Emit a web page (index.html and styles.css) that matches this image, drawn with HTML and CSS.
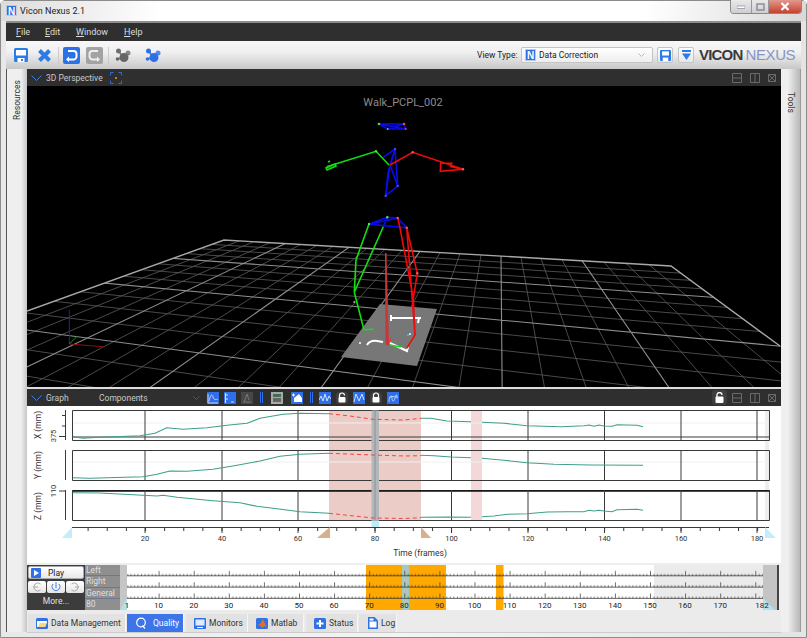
FILE: index.html
```html
<!DOCTYPE html>
<html lang="en">
<head>
<meta charset="utf-8">
<title>Vicon Nexus 2.1</title>
<link rel="stylesheet" href="styles.css">
</head>
<body>
<div class="window">
  <header class="titlebar">
    <span class="app-icon">N</span>
    <span class="app-title">Vicon Nexus 2.1</span>
    <div class="winctl">
      <span class="wbtn wmin"><svg width="8" height="4" viewBox="0 0 8 4"><rect x="0" y="1" width="8" height="2.4" fill="#fff" stroke="#889" stroke-width=".7"/></svg></span>
      <span class="wbtn wmax"><svg width="9" height="8" viewBox="0 0 9 8"><rect x="1" y="1" width="7" height="6" fill="none" stroke="#889" stroke-width="1.4"/></svg></span>
      <span class="wbtn wclose"><svg width="10" height="9" viewBox="0 0 10 9"><path d="M1.5 1 8.5 8M8.5 1 1.5 8" stroke="#fff" stroke-width="2.2"/></svg></span>
    </div>
  </header>
  <nav class="menubar">
    <span class="menu m-file"><u>F</u>ile</span>
    <span class="menu m-edit"><u>E</u>dit</span>
    <span class="menu m-window"><u>W</u>indow</span>
    <span class="menu m-help"><u>H</u>elp</span>
  </nav>
  <div class="toolbar">
    <svg class="ti" width="16" height="16" viewBox="0 0 16 16"><path d="M1 2.5A1.5 1.5 0 0 1 2.5 1h11A1.5 1.5 0 0 1 15 2.5v11a1.5 1.5 0 0 1-1.5 1.5h-11A1.5 1.5 0 0 1 1 13.5z" fill="#2d7be8"/><rect x="3" y="3" width="10" height="5.5" fill="#fff"/><rect x="4.5" y="11" width="7" height="4" fill="#fff"/><rect x="8" y="12" width="2" height="2" fill="#2d7be8"/></svg>
    <svg class="ti t-x" width="15" height="15" viewBox="0 0 15 15"><path d="M2.5 2.5 12.5 12.5M12.5 2.5 2.5 12.5" stroke="#2d7be8" stroke-width="4"/></svg>
    <span class="tsep t-s1"></span>
    <svg class="ti" width="17" height="17" viewBox="0 0 17 17"><rect width="17" height="17" rx="2" fill="#2c72e6"/><path d="M5 4h5.5a3 3 0 0 1 3 3v2.500a3 3 0 0 1-3 3H4.500" fill="none" stroke="#fff" stroke-width="2"/><path d="M6 9.500 3 12.500 6 15" fill="#fff"/></svg>
    <svg class="ti t-redo" width="17" height="17" viewBox="0 0 17 17"><rect width="17" height="17" rx="2" fill="#a3a3a3"/><path d="M12 4H6.500a3 3 0 0 0-3 3v2.500a3 3 0 0 0 3 3h6" fill="none" stroke="#eee" stroke-width="2"/><path d="M11 9.500 14 12.500 11 15" fill="#eee"/></svg>
    <span class="tsep t-s2"></span>
    <svg class="ti t-n1" width="16" height="15" viewBox="0 0 16 15"><path d="M3 3 9 9M13 5 9 9M3 11 9 9" stroke="#777" stroke-width="1.500"/><circle cx="3.500" cy="3" r="2.500" fill="#6f6f6f"/><circle cx="13" cy="5" r="2.500" fill="#888"/><circle cx="9" cy="9.500" r="4.500" fill="#666"/><circle cx="2.500" cy="11" r="1.800" fill="#666"/></svg>
    <svg class="ti t-n2" width="16" height="15" viewBox="0 0 16 15"><path d="M3 3 9 9M13 5 9 9M3 11 9 9" stroke="#2d6fe6" stroke-width="1.500"/><circle cx="3.500" cy="3" r="2.500" fill="#2d6fe6"/><circle cx="13" cy="5" r="2.500" fill="#4f8af0"/><circle cx="9" cy="9.500" r="4.500" fill="#2d6fe6"/><circle cx="2.500" cy="11" r="1.800" fill="#2d6fe6"/></svg>
    <span class="view-label">View Type:</span>
    <div class="combo">
      <span class="app-icon combo-icon">N</span>
      <span class="combo-text">Data Correction</span>
      <svg width="7" height="4" viewBox="0 0 7 4"><path d="M.5.5 3.500 3.500 6.500.5" fill="none" stroke="#a9bcd8"/></svg>
    </div>
    <span class="tbtn"><svg width="11" height="11" viewBox="0 0 16 16"><path d="M0 1.500A1.500 1.500 0 0 1 1.500 0h13A1.500 1.500 0 0 1 16 1.500v13a1.500 1.500 0 0 1-1.500 1.500h-13A1.500 1.500 0 0 1 0 14.500z" fill="#2d7be8"/><rect x="3" y="2" width="10" height="6" fill="#fff"/><rect x="4" y="11" width="8" height="5" fill="#fff"/></svg></span>
    <span class="tbtn tbtn2"><svg width="9" height="10" viewBox="0 0 9 10"><rect width="9" height="2" fill="#2d7be8"/><path d="M0 3.500H9L4.500 10z" fill="#2d7be8"/></svg></span>
    <div class="logo"><b>VICON</b><span>NEXUS</span></div>
  </div>
  <div class="main">
    <aside class="side side-left"><span class="side-text">Resources</span></aside>
    <div class="center">
      <div class="phead">
        <svg class="chev" width="11" height="6" viewBox="0 0 11 6"><path d="M.5.5 5.500 5.500 10.500.5" fill="none" stroke="#3f7fe0"/></svg>
        <span class="ptitle ptitle3d">3D Perspective</span>
        <svg class="focus" width="12" height="12" viewBox="0 0 12 12"><path d="M.5 3.500V.5h3M8.500.5h3v3M11.500 8.500v3h-3M3.500 11.500h-3v-3" fill="none" stroke="#2d6fe6"/><circle cx="6" cy="6" r="1" fill="#e0a030"/></svg>
        <div class="pctl">
          <svg width="10" height="10" viewBox="0 0 10 10"><path d="M.5.5h9v9h-9zM.5 5h9" fill="none" stroke="#6a6a6a"/></svg>
          <svg width="10" height="10" viewBox="0 0 10 10"><path d="M.5.5h9v9h-9zM5 .5v9" fill="none" stroke="#6a6a6a"/></svg>
          <svg width="8" height="8" viewBox="0 0 8 8"><path d="M.5.5h7v7h-7zM.5.5l7 7M7.500.5l-7 7" fill="none" stroke="#6a6a6a"/></svg>
        </div>
      </div>
      <svg class="view3d" viewBox="27 86 754 301" width="754" height="301">
        <defs><clipPath id="floor"><path d="M224 240 671 266 1013 516-328 438z"/></clipPath></defs>
        <rect x="27" y="86" width="754" height="301" fill="#000"/>
        <text class="clip-title" x="403" y="106" text-anchor="middle">Walk_PCPL_002</text>
        <g clip-path="url(#floor)">
          <path class="gminor" d="M500 141-283 441M500 141-238 443M500 141-190 446M500 141-97 451M500 141-49 454M500 141-1 457M500 141 101 463M500 141 155 466M500 141 206 469M500 141 320 476M500 141 380 479M500 141 443 483M500 141 563 490M500 141 623 493M500 141 686 497M500 141 812 504M500 141 878 508M500 141 947 512"/>
          <path class="gminor" d="M-100 225.300 800 280.400M-100 229.300 800 287.400M-100 234 800 295.500M-100 244 800 313M-100 250 800 323.400M-100 256.800 800 335M-100 273.600 800 364M-100 284.400 800 383M-100 297.800 800 406M-100 331 800 464M-100 355 800 505"/>
          <path class="gmajor" d="M500 141-145 449M500 141 47 460M500 141 260 472M500 141 503 486M500 141 746 500M-100 238.700 800 303.600M-100 264 800 348M-100 313 800 433"/>
        </g>
        <path class="gedge" d="M27 311 224 240 671 266 780 346"/>
        <path class="axis-b" d="M69.300 310V344"/>
        <path class="axis-g" d="M69.300 344 77.300 336"/>
        <path class="axis-r" d="M69.300 344 103.300 346.700"/>
        <polygon class="plate" points="380,304 437,309 417,366 341,357"/>
        <path class="plate-mark" d="M390 318H421M419 318 418 323M391 315V321M367 345Q370 340 377 341L383 342M390 343 407 351 408 347"/>
        <circle cx="360" cy="343" r="1" fill="#fff"/>
        <path class="pole" d="M385 253H386.500L389 345H385.500z"/>
        <g class="bones blue">
          <path d="M379 124H404L405.700 129H387.700zM379 124 405.700 129M404 124 387.700 129"/>
          <path d="M383.300 157.300 395 149 397.700 186 385.700 195.700 390 165 397.700 186M395 149 388 173 385.700 195.700M390 165 395 149"/>
          <path d="M369 224.300 387.300 217.300 397.700 218 406.700 227.700zM387.300 217.300 383.300 226.700M397.700 218 369 224.300"/>
        </g>
        <g class="bones green">
          <path d="M326.700 166.700 376 151.300 389 165"/>
          <path d="M326 168 335 164 336 166 327 170zM328 162 330 161"/>
          <path d="M369 224 356 260 354.300 292.300M383.300 226.700 354.300 292.300M356 260 355 280"/>
          <path d="M354.300 292.300 364 330 374 329M390 345 401 347"/>
        </g>
        <g class="bones red">
          <path d="M390 165 412.700 152.300 463 169.300 440.300 171.300 440.700 163.300 451.700 163.300 450.700 166.700 463 169.300"/>
          <path d="M397.700 218 400 228 413.300 298.300 415 335 406.700 348.300M406.700 227.700 417.300 273.300 413.300 298.300M406.700 227.700 415 335"/>
        </g>
        <path d="M389 340 391 340" stroke="#f33" stroke-width="3"/>
        <rect x="407" y="334" width="2" height="2" fill="#5ad"/>
        <rect x="409" y="333" width="2" height="2" fill="#bde"/>
        <g class="markers">
          <circle cx="379" cy="124" r="1.300" fill="#4d4"/><circle cx="404" cy="124" r="1.300" fill="#e44"/><circle cx="405.700" cy="129" r="1" fill="#e44"/><circle cx="387.700" cy="129" r="1" fill="#4d4"/>
          <circle cx="376" cy="151.300" r="1.200" fill="#4e4"/><circle cx="412.700" cy="152.300" r="1.200" fill="#f55"/><circle cx="463" cy="169.300" r="1.200" fill="#f55"/><circle cx="395" cy="149" r="1.200" fill="#44f"/><circle cx="397.700" cy="186" r="1.200" fill="#44f"/><circle cx="385.700" cy="195.700" r="1.200" fill="#44f"/>
          <circle cx="369" cy="224" r="1.200" fill="#4e4"/><circle cx="387.300" cy="217.300" r="1.200" fill="#4e4"/><circle cx="397.700" cy="218" r="1.200" fill="#f55"/><circle cx="406.700" cy="227.700" r="1.200" fill="#f55"/><circle cx="417.300" cy="273.300" r="1.200" fill="#f55"/><circle cx="354.300" cy="302" r="1" fill="#aaa"/>
        </g>
      </svg>
      <div class="splitter"></div>
      <div class="phead">
        <svg class="chev" width="11" height="6" viewBox="0 0 11 6"><path d="M.5.5 5.500 5.500 10.500.5" fill="none" stroke="#3f7fe0"/></svg>
        <span class="ptitle gtitle">Graph</span>
        <span class="ptitle gcomp">Components</span>
        <svg class="gdrop" width="7" height="4" viewBox="0 0 7 4"><path d="M.5.5 3.500 3.500 6.500.5" fill="none" stroke="#3a5c94"/></svg>
        <div class="gtools">
          <svg class="gi" viewBox="0 0 12 12"><rect width="12" height="12" fill="#2f6fec"/><path d="M1 2V11H11M2 9C4 2 5 2 6 5S9 8 11 7" fill="none" stroke="#cfe0ff" stroke-width=".9"/></svg>
          <svg class="gi" viewBox="0 0 12 12"><rect width="12" height="12" fill="#2f6fec"/><path d="M1.500 1V11M1 3H4M1 7H4M7 10 10 10" fill="none" stroke="#cfe0ff" stroke-width="1.100"/></svg>
          <svg class="gi" viewBox="0 0 12 12"><rect width="12" height="12" fill="#474747"/><path d="M2 10H10M3 10 6 2 8 8" fill="none" stroke="#777"/></svg>
          <span class="gsep"></span>
          <svg class="gi" viewBox="0 0 12 12"><rect width="12" height="12" fill="#a8a8a8"/><rect x="2" y="2" width="8" height="3" fill="#3f7050"/><rect x="2" y="6" width="8" height="4" fill="#666"/></svg>
          <svg class="gi gi-wide" viewBox="0 0 12 12"><rect width="12" height="12" fill="#2f6fec"/><path d="M3 10V6L8 2 11 6V10z" fill="#fff"/><path d="M1 3H4M2.500 1.500V4.500" stroke="#fff"/></svg>
          <span class="gsep gsep2"></span>
          <svg class="gi" viewBox="0 0 12 12"><rect width="12" height="12" fill="#2f6fec"/><path d="M0 8 2 4 4 9 6 2 8 9 10 4 12 7" fill="none" stroke="#cfe0ff"/></svg>
          <svg class="gi gi-lock" viewBox="0 0 12 12"><rect width="12" height="12" fill="#3e3e3e"/><path d="M3.500 5V3.500a2.500 2.500 0 0 1 5 0" fill="none" stroke="#fff" stroke-width="1.200"/><rect x="2.500" y="5" width="7" height="5.500" rx="1" fill="#fff"/></svg>
          <svg class="gi" viewBox="0 0 12 12"><rect width="12" height="12" fill="#2f6fec"/><path d="M1 10 3 2 6 9 9 2 11 8" fill="none" stroke="#cfe0ff"/></svg>
          <svg class="gi gi-lock" viewBox="0 0 12 12"><rect width="12" height="12" fill="#3e3e3e"/><path d="M3.500 5V3.500a2.500 2.500 0 0 1 5 0V5" fill="none" stroke="#fff" stroke-width="1.200"/><rect x="2.500" y="5" width="7" height="5.500" rx="1" fill="#fff"/></svg>
          <svg class="gi" viewBox="0 0 12 12"><rect width="12" height="12" fill="#2f6fec"/><path d="M2 10C2 4 5 2 5 6S7 10 8 6 10 2 10 5M2 6C4 4 8 4 11 6" fill="none" stroke="#cfe0ff" stroke-width=".8"/></svg>
        </div>
        <div class="pctl">
          <span class="lockbtn"><svg width="9" height="11" viewBox="0 0 9 11"><path d="M2 5V3a2.500 2.500 0 0 1 5 0" fill="none" stroke="#fff" stroke-width="1.300"/><rect x=".5" y="4.500" width="8" height="6.500" rx="1" fill="#fff"/></svg></span>
          <svg width="10" height="10" viewBox="0 0 10 10"><path d="M.5.5h9v9h-9zM.5 5h9" fill="none" stroke="#6a6a6a"/></svg>
          <svg width="10" height="10" viewBox="0 0 10 10"><path d="M.5.5h9v9h-9zM5 .5v9" fill="none" stroke="#6a6a6a"/></svg>
          <svg width="8" height="8" viewBox="0 0 8 8"><path d="M.5.5h7v7h-7zM.5.5l7 7M7.500.5l-7 7" fill="none" stroke="#6a6a6a"/></svg>
        </div>
      </div>
      <svg class="graph" viewBox="27 406 754 157" width="754" height="157">
        <defs>
          <pattern id="minor" patternUnits="userSpaceOnUse" x="145" y="527" width="19.130" height="8"><rect width="1" height="4" fill="#333"/></pattern>
        </defs>
        <rect x="27" y="406" width="754" height="157" fill="#fff"/>
        <rect x="765" y="410" width="4" height="110" fill="#eee"/>
        <rect class="band1" x="329" y="410.500" width="92" height="110"/>
        <rect class="band2" x="471" y="410.500" width="11" height="110"/>
        <path class="faint" d="M73 423H769M73 462H769"/>
        <path class="plotline" d="M72.500 410.500H769.500V440.500H72.500ZM72.500 450.500H769.500V480.500H72.500ZM72.500 490.500H769.500V520.500H72.500ZM73 437H769"/>
        <path class="plotline thick" d="M72.500 491H769.500"/>
        <path class="plotline" d="M145 410V440M222 410V440M298 410V440M451.500 410V440M528 410V440M604.500 410V440M681 410V440M757 410V440M145 450V480M222 450V480M298 450V480M451.500 450V480M528 450V480M604.500 450V480M681 450V480M757 450V480M145 490V520M222 490V520M298 490V520M451.500 490V520M528 490V520M604.500 490V520M681 490V520M757 490V520"/>
        <path class="plotline" d="M65.500 410V440M65.500 450V480M65.500 490V520M62 415.500H65.500M62 426H65.500M59 436.500H65.500M59 491H65.500"/>
        <rect class="cursor" x="371.500" y="410.500" width="7.500" height="110"/>
        <path class="cursor-line" d="M375 410.500V520.500"/>
        <path class="trace" d="M72.700 436.700 83 438.300 100 437.300 140 435.700 155 433.300 166.700 427.700 183 429.300 207 427.700 227 425.300 247 423.300 260 418.300 283 414.300 300 413.300 329 413.700"/>
        <path class="trace" d="M421 418.300 431 418.300 447 421 471 421.700M482 422.300 504 423.300 527 425.700 561 426.700 584 425.700 589 425 594 426.300 599 425 604 426 612 426.300 617 424.700 637 425.300 643 426.700"/>
        <path class="trace" d="M72.700 477.700 90 478.300 143 476.700 157 474.300 170 471 187 471.300 213 469.300 233 466 260 461 280 456.300 300 454.300 329 453.300"/>
        <path class="trace" d="M421 455.300 434 455.700 451 457 471 457.700M482 458.300 504 460.300 527 462.700 554 464.300 591 465 643 465.300"/>
        <path class="trace" d="M72.700 492.700 100 493 143 495.300 157 496 163 495.300 177 497.300 213 500.700 240 502.700 257 506.300 277 508.700 300 511.700 329 513.300"/>
        <path class="trace" d="M421 517.300 447 517 471 517.300M482 516.700 494 516 507 514.300 527 513.700 547 512 567 511.700 584 511.700 589 510.300 594 511 599 510.300 604 511 612 511.700 617 509.700 637 509.300 643 510.300"/>
        <path class="gap" d="M329 413.700 350 416 373 419.300 404 420 421 418.300M329 453.300 373 455 404 456 421 455.700M329 513.300 373 518 404 518.500 421 517.700"/>
        <rect class="cursor-cap" x="371.500" y="520.500" width="7.500" height="6.500"/>
        <path class="plotline" d="M72 527.500H769"/>
        <rect x="72" y="527" width="697" height="4" fill="url(#minor)"/>
        <path class="plotline" d="M145 527V533M222 527V533M298 527V533M375 527V533M451.500 527V533M528 527V533M604.500 527V533M681 527V533M757 527V533"/>
        <polygon class="tri-blue" points="72,527 72,538 62,538"/>
        <polygon class="tri-tan" points="330,527 330,538 317,538"/>
        <polygon class="tri-tan" points="421,527 431,538 421,538"/>
        <polygon class="tri-blue" points="765,527 776,538 765,538"/>
        <g class="ticktext">
          <text x="145" y="541">20</text><text x="222" y="541">40</text><text x="298" y="541">60</text><text x="375" y="541">80</text><text x="451.500" y="541">100</text><text x="528" y="541">120</text><text x="604.500" y="541">140</text><text x="681" y="541">160</text><text x="757" y="541">180</text>
        </g>
        <text class="axis-title" x="420" y="556">Time (frames)</text>
        <text class="axis-title" transform="translate(41 425) rotate(-90)">X (mm)</text>
        <text class="axis-title" transform="translate(41 465) rotate(-90)">Y (mm)</text>
        <text class="axis-title" transform="translate(41 506) rotate(-90)">Z (mm)</text>
        <text class="ticktext" transform="translate(56 436) rotate(-90)">375</text>
        <text class="ticktext" transform="translate(56 491) rotate(-90)">110</text>
      </svg>
      <div class="timeline">
        <div class="tl-ctrl">
          <button class="play"><span class="play-ico"></span><span>Play</span></button>
          <div class="steps">
            <span class="step"><svg width="10" height="10" viewBox="0 0 10 10"><path d="M8.500 2A4 4 0 1 0 8.500 8M1 5H6" fill="none" stroke="#aaa"/></svg></span>
            <span class="step"><svg width="10" height="10" viewBox="0 0 10 10"><path d="M2 2A4 4 0 1 0 8 2M5 0V6" fill="none" stroke="#4a7de0"/></svg></span>
            <span class="step"><svg width="10" height="10" viewBox="0 0 10 10"><path d="M1.500 2A4 4 0 1 1 1.500 8M9 5H5" fill="none" stroke="#aaa"/></svg></span>
          </div>
          <span class="more">More...</span>
        </div>
        <div class="tl-labels">
          <span>Left</span><span>Right</span><span>General</span><span class="frame">80</span>
        </div>
        <svg class="tl-track" viewBox="120 565 661 45" width="661" height="45">
          <defs>
            <pattern id="rule" patternUnits="userSpaceOnUse" x="158.600" y="565" width="35.100" height="11.300">
              <path d="M.5 6V11M4 9V11M7.500 9V11M11 9V11M14.500 9V11M18 9V11M21.500 9V11M25.100 9V11M28.600 9V11M32.100 9V11" stroke="#333" stroke-width=".7"/>
              <rect y="10.300" width="35.100" height=".8" fill="#333"/>
            </pattern>
          </defs>
          <rect x="120" y="565" width="7" height="45" fill="#c6c6c6"/>
          <rect x="127" y="565" width="527" height="45" fill="#fff"/>
          <rect x="654" y="565" width="109" height="45" fill="#ebebeb"/>
          <rect x="763" y="565" width="14" height="45" fill="#c4c4c4"/>
          <rect x="777" y="565" width="2" height="45" fill="#444"/>
          <rect x="366" y="565" width="80" height="45" fill="#ffa800"/>
          <rect x="496" y="565" width="7.500" height="45" fill="#ffa800"/>
          <rect x="402" y="565" width="7" height="45" fill="#a9c8bd"/>
          <rect x="127" y="565" width="636" height="33.900" fill="url(#rule)"/>
          <polygon class="tri-cyan" points="127,598 127,610 120,610"/>
          <polygon class="tri-cyan" points="763,598 775,610 763,610"/>
          <g class="tl-nums">
            <text x="127" y="608">1</text><text x="158.600" y="608">10</text><text x="193.700" y="608">20</text><text x="228.800" y="608">30</text><text x="263.900" y="608">40</text><text x="299" y="608">50</text><text x="334.100" y="608">60</text><text x="369.200" y="608">70</text><text x="404.300" y="608">80</text><text x="439.400" y="608">90</text><text x="474.500" y="608">100</text><text x="509.600" y="608">110</text><text x="544.700" y="608">120</text><text x="579.800" y="608">130</text><text x="614.900" y="608">140</text><text x="650" y="608">150</text><text x="685.100" y="608">160</text><text x="720.200" y="608">170</text><text x="762" y="608">182</text>
          </g>
        </svg>
      </div>
      <div class="tabs">
        <span class="tab t-dm"><svg width="12" height="11" viewBox="0 0 12 11"><rect width="12" height="11" rx="1.500" fill="#2f72e8"/><path d="M1 3H11V4L9 9H1z" fill="#fff"/><path d="M2 9 3.500 5H11L9 9z" fill="#f4d98a"/></svg>Data Management</span>
        <span class="tab t-q active"><svg width="12" height="12" viewBox="0 0 12 12"><circle cx="6" cy="5.500" r="4.300" fill="none" stroke="#fff" stroke-width="1.200"/><path d="M7.500 8.500 10 11.500" stroke="#fff" stroke-width="1.200"/></svg>Quality</span>
        <span class="tab t-m"><svg width="12" height="11" viewBox="0 0 12 11"><rect width="12" height="11" rx="1" fill="#2f72e8"/><rect x="1.500" y="1.500" width="9" height="6" fill="#fff"/><rect x="1.500" y="1.500" width="9" height="6" fill="#2f72e8" opacity=".15"/><rect x="3" y="9" width="6" height="1" fill="#fff"/></svg>Monitors</span>
        <span class="tab t-l"><svg width="12" height="11" viewBox="0 0 12 11"><rect width="12" height="11" rx="1.500" fill="#2f72e8"/><path d="M1 7 4 6 7 1 11 10 8.500 8 6 10 4 7.500z" fill="#e2701e"/></svg>Matlab</span>
        <span class="tab t-s"><svg width="12" height="11" viewBox="0 0 12 11"><rect width="12" height="11" rx="1.500" fill="#2f72e8"/><path d="M6 2V9M2.500 5.500H9.500" stroke="#fff" stroke-width="2"/></svg>Status</span>
        <span class="tab t-g"><svg width="11" height="12" viewBox="0 0 11 12"><path d="M1 0H7.500L11 3.500V12H1z" fill="#2f72e8"/><path d="M2.500 4.500H9.500V10.500H2.500zM2.500 1.500H6.500V3.500H2.500z" fill="#fff"/></svg>Log</span>
      </div>
    </div>
    <aside class="side side-right"><span class="side-text side-text-r">Tools</span></aside>
  </div>
</div>
</body>
</html>
```

FILE: styles.css
```css
* { box-sizing: border-box; }
html, body { margin: 0; padding: 0; }
body {
  width: 807px;
  height: 638px;
  overflow: hidden;
  font-family: Roboto, "Open Sans", sans-serif;
  font-size: 8.500px;
  color: #222;
  background: #fff;
}
svg { display: block; flex: none; }
.window {
  width: 807px;
  height: 638px;
  display: flex;
  flex-direction: column;
  padding: 0 5px 5px;
  border: 1px solid #8b8b8b;
  border-radius: 5px 5px 0 0;
  background: linear-gradient(90deg, #e8e8e8, #f4f4f4 50%, #e4e4e4);
}
.titlebar {
  height: 20px;
  display: flex;
  align-items: flex-start;
  margin: 0 -5px;
  padding: 4px 5px 0 5px;
  background: linear-gradient(100deg, #dcdcdc 0, #fff 20%, #fff 80%, #d8d8d8);
  position: relative;
}
.app-icon {
  width: 11px;
  height: 11px;
  background: #2f6fe6;
  color: #fff;
  font: bold 10px/11px "Liberation Sans", sans-serif;
  text-align: center;
  border: 1px solid #bcd;
  flex: none;
}
.app-title { margin-left: 3px; font-size: 9px; line-height: 12px; color: #222; }
.winctl {
  position: absolute;
  top: -1px;
  right: 4px;
  display: flex;
  height: 14px;
  border: 1px solid #8a8a8a;
  border-top: 0;
  border-radius: 0 0 4px 4px;
  overflow: hidden;
}
.wbtn { display: flex; align-items: center; justify-content: center; height: 13px; }
.wmin { width: 21px; background: linear-gradient(#e9e9e9, #cfcfcf); border-right: 1px solid #999; }
.wmax { width: 17px; background: linear-gradient(#e9e9e9, #cfcfcf); border-right: 1px solid #999; }
.wclose { width: 32px; background: linear-gradient(#e2988e, #c6422f); }
.menubar {
  height: 20px;
  display: flex;
  align-items: center;
  padding-left: 10px;
  background: #2f2f2f;
  border-top: 2px solid #8d8d8d;
  color: #dcdcdc;
  font-size: 9px;
}
.menu { flex: none; }
.m-file { width: 29px; }
.m-edit { width: 31px; }
.m-window { width: 48px; }
.toolbar {
  height: 28px;
  display: flex;
  align-items: center;
  padding-left: 7px;
  background: linear-gradient(#f8f8f8, #f0f0f0 40%, #c8c8c8);
}
.t-x { margin-left: 8px; }
.tsep { width: 1px; height: 17px; background: #ccc; flex: none; }
.t-s1 { margin: 0 4px 0 6px; }
.t-redo { margin-left: 6px; }
.t-s2 { margin: 0 6px 0 5px; }
.t-n2 { margin-left: 14px; }
.view-label { margin-left: 316px; width: 44px; color: #222; flex: none; }
.combo {
  width: 132px;
  height: 16px;
  display: flex;
  align-items: center;
  padding: 0 7px 0 3px;
  border: 1px solid #c4c4c4;
  border-radius: 2px;
  background: linear-gradient(#fff, #eee);
  flex: none;
}
.combo-icon { width: 11px; height: 12px; line-height: 11px; }
.combo-text { margin-left: 3px; flex: 1; color: #222; }
.tbtn {
  width: 16px;
  height: 16px;
  margin-left: 4px;
  display: flex;
  align-items: center;
  justify-content: center;
  border: 1px solid #c4c4c4;
  border-radius: 2px;
  background: linear-gradient(#fff, #e6e6e6);
  flex: none;
}
.tbtn2 { margin-left: 5px; }
.logo {
  margin-left: 5px;
  display: flex;
  align-items: center;
  font: 15px/16px "Liberation Sans", sans-serif;
  letter-spacing: -.6px;
  white-space: nowrap;
}
.logo b { color: #3a3a3a; letter-spacing: -.8px; }
.logo span { margin-left: 3px; color: #8496c4; letter-spacing: -.4px; }
.main { flex: 1; min-height: 0; display: flex; }
.side {
  flex: none;
  display: flex;
  justify-content: center;
  background: #eee;
  color: #333;
}
.side-left {
  width: 21px;
  border-left: 1px solid #555;
  background: linear-gradient(90deg, #efefef 70%, #c6c6c6);
}
.side-right {
  width: 20px;
  background: linear-gradient(90deg, #efefef 35%, #bcbcbc 95%);
  border-right: 1px solid #999;
}
.side-text { writing-mode: vertical-rl; transform: rotate(180deg); margin-top: 12px; height: 39px; text-align: left; }
.side-text-r { transform: none; margin-top: 23px; height: 22px; }
.center { flex: 1; min-width: 0; display: flex; flex-direction: column; }
.phead {
  height: 17px;
  display: flex;
  align-items: center;
  padding-left: 4px;
  background: #2f2f2f;
  color: #c8c8c8;
  font-size: 8.500px;
  flex: none;
}
.chev { margin-right: 4px; }
.ptitle { white-space: nowrap; flex: none; }
.ptitle3d { width: 54px; }
.focus { margin-left: 10px; }
.gtitle { width: 53px; }
.gcomp { width: 94px; }
.gdrop { margin-right: 7px; }
.gtools { display: flex; align-items: center; gap: 5px; }
.gi { width: 12px; height: 12px; }
.gi-wide { margin-left: 3px; }
.gi-lock { border-radius: 3px; }
.gsep { width: 3px; height: 11px; margin: 0 3px 0 2px; border-left: 1px solid #2f6fec; border-right: 1px solid #2f6fec; }
.gsep2 { margin-right: 1px; }
.pctl { margin-left: auto; display: flex; align-items: center; gap: 8px; padding-right: 5px; }
.lockbtn {
  width: 15px;
  height: 15px;
  margin-right: -3px;
  display: flex;
  align-items: center;
  justify-content: center;
  background: #3e3e3e;
  border-radius: 3px;
}
.view3d { flex: none; }
.clip-title { font: 11px Roboto, sans-serif; fill: #8c8c8c; }
.gminor { stroke: #5c5c5c; stroke-width: .8; fill: none; }
.gmajor { stroke: #8f8f8f; stroke-width: 1.1; fill: none; }
.gedge { stroke: #a8a8a8; stroke-width: 1.4; fill: none; }
.axis-b { stroke: #26268c; stroke-width: 1; fill: none; }
.axis-g { stroke: #1f9a1f; stroke-width: 1; fill: none; }
.axis-r { stroke: #8c1010; stroke-width: 1; fill: none; }
.plate { fill: #777; }
.plate-mark { stroke: #fff; stroke-width: 2; fill: none; }
.pole { fill: #c43a3a; }
.bones path { fill: none; stroke-width: 1.6; }
.blue path { stroke: #0a0af0; }
.green path { stroke: #10e010; }
.red path { stroke: #f00a0a; }
.splitter { height: 2px; background: #ddd; flex: none; }
.graph { flex: none; }
.band1 { fill: #ecccc7; }
.band2 { fill: #f4d7d9; }
.cursor { fill: #b3b7bb; }
.cursor-line { stroke: #8e9296; stroke-width: 1; fill: none; }
.cursor-cap { fill: #bfeaf6; }
.faint { stroke: #f0f0f0; fill: none; }
.plotline { stroke: #3a3a3a; stroke-width: 1; fill: none; }
.plotline.thick { stroke: #111; stroke-width: 1.4; }
.trace { stroke: #3f9f8c; stroke-width: 1.1; fill: none; }
.gap { stroke: #f4433f; stroke-width: 1; stroke-dasharray: 4 3; fill: none; }
.tri-blue { fill: #c4ecfb; }
.tri-tan { fill: #d8b08c; }
.tri-cyan { fill: #b0e2ee; }
.ticktext text, text.ticktext { font: 7.500px Roboto, sans-serif; fill: #333; text-anchor: middle; }
.axis-title { font: 8.500px Roboto, sans-serif; fill: #333; text-anchor: middle; }
.timeline { height: 47px; display: flex; padding-top: 2px; background: #eee; flex: none; }
.tl-ctrl {
  width: 58px;
  padding: 1px 1px 0;
  display: flex;
  flex-direction: column;
  align-items: stretch;
  background: #3c3c3c;
  flex: none;
}
.play {
  height: 13px;
  display: flex;
  align-items: center;
  gap: 7px;
  padding: 0 0 0 2px;
  border: 1px solid #aaa;
  border-radius: 2px;
  background: linear-gradient(#fff, #e8e8e8);
  font: 8.500px Roboto, sans-serif;
  color: #222;
}
.play-ico {
  width: 10px;
  height: 10px;
  border-radius: 1px;
  background: #2f6fec;
  position: relative;
}
.play-ico::after {
  content: "";
  position: absolute;
  left: 3px;
  top: 2px;
  border-left: 5px solid #fff;
  border-top: 3px solid transparent;
  border-bottom: 3px solid transparent;
}
.steps { display: flex; gap: 1px; margin-top: 2px; }
.step {
  flex: 1;
  height: 12px;
  display: flex;
  align-items: center;
  justify-content: center;
  background: linear-gradient(#fff, #e4e4e4);
  border-radius: 2px;
}
.more { margin-top: 2px; text-align: center; color: #e0e0e0; line-height: 12px; }
.tl-labels {
  width: 35px;
  display: flex;
  flex-direction: column;
  background: #8f8f8f;
  color: #dfdfdf;
  flex: none;
}
.tl-labels span { height: 11.300px; line-height: 10px; padding-left: 1px; border-bottom: 1px solid #6d7890; }
.tl-labels .frame { border-bottom: 0; height: 11px; line-height: 11px; }
.tl-track { flex: none; }
.tl-nums text { font: 8px Roboto, sans-serif; fill: #222; text-anchor: middle; }
.tabs {
  height: 23px;
  display: flex;
  align-items: flex-start;
  padding: 4px 0 0 1px;
  background: #ebebeb;
  border-bottom: 1px solid #ccc;
  flex: none;
}
.tab {
  height: 18px;
  display: flex;
  align-items: center;
  gap: 3px;
  padding-left: 8px;
  background: #e2e2e2;
  border-right: 1px solid #f6f6f6;
  font-size: 8.500px;
  color: #333;
  white-space: nowrap;
  flex: none;
}
.t-dm { width: 98px; }
.t-q { width: 57px; margin-left: 1px; }
.t-m { width: 62px; margin-left: 2px; }
.t-l { width: 56px; }
.t-s { width: 52px; margin-left: 2px; }
.t-g { width: 38px; margin-left: 1px; }
.active { background: #3d74e8; color: #fff; gap: 6px; }
```
